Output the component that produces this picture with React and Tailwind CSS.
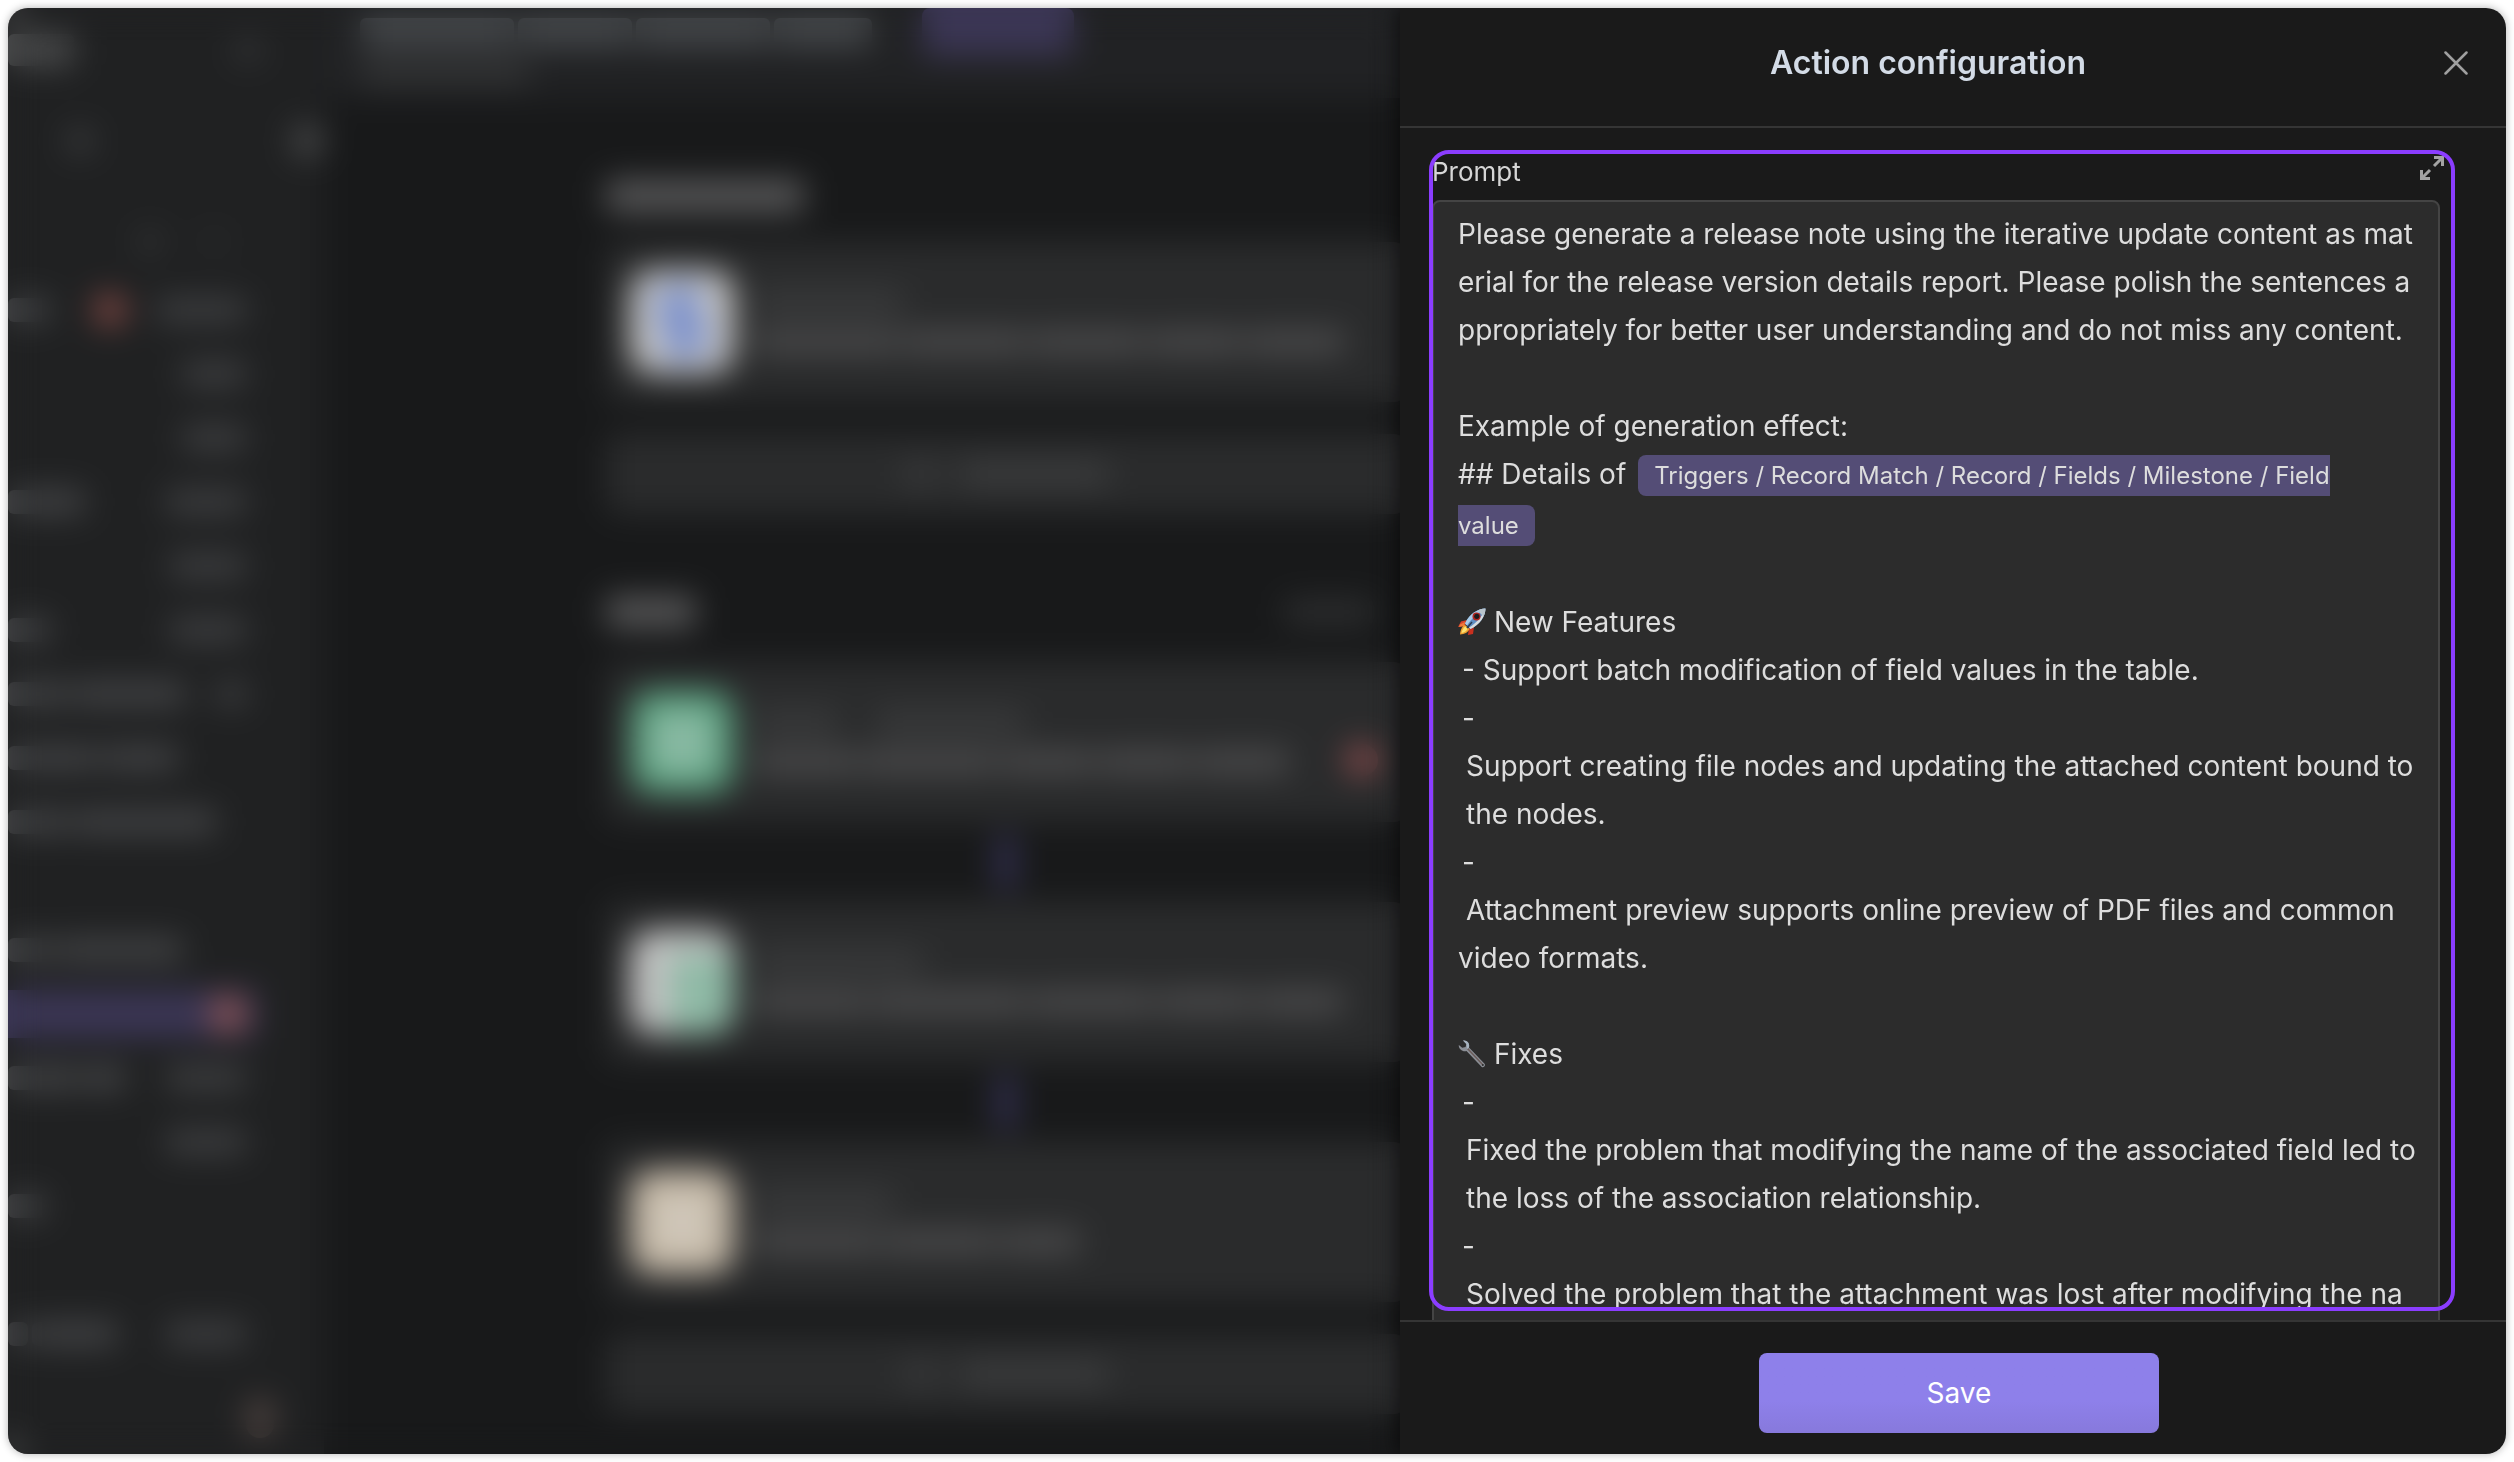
import React from "react";
import clsx from "clsx";

const navRows = [
  { left: ["w-[42px]"], dot: true, right: "w-[90px]" },
  { right: "w-[64px]" },
  { right: "w-[64px]" },
  { left: ["w-[77px]"], right: "w-[80px]" },
  { right: "w-[76px]" },
  { left: ["w-[42px]"], right: "w-[76px]" },
  { left: ["w-[60px]", "w-[114px]"], right: "w-[30px]" },
  { left: ["w-[90px]", "w-[76px]"] },
  { left: ["w-[60px]", "w-[144px]"] },
  { },
  { left: ["w-[45px]", "w-[126px]"] },
  { active: true, dot: true },
  { left: ["w-[70px]", "w-[44px]"], right: "w-[80px]" },
  { right: "w-[80px]" },
  { left: ["w-[37px]"] },
  { },
  { left: ["w-[20px]", "w-[86px]"], right: "w-[80px]" },
];

const Bar = ({ className }) => <div className={clsx("h-6 rounded-md", className)} />;

// a line of text made of word-sized bars
const Words = ({ widths, className }) => (
  <div className="flex gap-1">
    {widths.map((width, i) => (
      <Bar key={i} className={clsx(width, className)} />
    ))}
  </div>
);

const NavRow = ({ row }) => (
  <div className={clsx("h-16 flex items-center pr-[78px]", row.active && "relative")}>
    {row.active && <div className="absolute inset-y-2 left-0 right-[68px] bg-[#3b3655]" />}
    {row.left && <Words widths={row.left} className="bg-[#434446]" />}
    {row.dot && !row.active && <div className="w-8 h-8 ml-11 rounded-full bg-[#8a4c47]" />}
    {row.dot && row.active && <div className="relative w-9 h-9 ml-auto rounded-full bg-[#8f5554]" />}
    {row.right && <Bar className={clsx("ml-auto bg-[#3e3f41]", row.right)} />}
  </div>
);

const Sidebar = () => (
  <aside className="w-[316px] shrink-0 bg-[#202122]">
    <div className="h-[84px] flex items-center justify-between pr-16">
      <Bar className="w-[66px] h-8 bg-[#4a4b4c]" />
      <div className="w-6 h-6 rounded-full bg-[#38393b]" />
    </div>
    <div className="h-[90px] flex items-center justify-between pl-[60px] pt-2">
      <div className="w-6 h-6 rounded-full bg-[#424345]" />
      <div className="w-8 h-8 rounded-full bg-[#4a4b4c]" />
    </div>
    <div className="h-[96px] flex items-center gap-10 pt-6 pl-[130px]">
      <div className="w-6 h-6 rounded-full bg-[#343536]" />
      <div className="w-6 h-6 rounded-full bg-[#2a2b2c]" />
    </div>
    {navRows.map((row, i) => (
      <NavRow key={i} row={row} />
    ))}
    <div className="flex justify-end pt-8 pr-[50px]">
      <div className="w-7 h-10 rounded-full bg-[#504542]" />
    </div>
  </aside>
);

const StepCard = ({ icon, top, topTwo, bottom, alert }) => (
  <div className="h-40 flex items-center bg-[#2a2b2c] rounded-xl pl-6 pr-7">
    {icon}
    <div className="flex-1 ml-5 flex flex-col gap-4">
      <div className="flex gap-9">
        <Bar className={clsx("bg-[#3a3b3c]", top)} />
        {topTwo && <Bar className={clsx("bg-[#3a3b3c]", topTwo)} />}
      </div>
      <Words widths={bottom} className="bg-[#4b4b4c]" />
    </div>
    {alert && <div className="w-8 h-8 mt-9 rounded-full bg-[#904f50]" />}
  </div>
);

const AddRow = () => (
  <div className="mt-8 h-20 flex items-center justify-center gap-5 bg-[#2a2b2c] rounded-xl">
    <Bar className="w-9 bg-[#38393a]" />
    <Bar className="w-[150px] bg-[#3c3d3e]" />
  </div>
);

const Connector = () => (
  <div className="h-20 flex items-center justify-center">
    <div className="w-4 h-14 rounded-full bg-[#3b3763]" />
  </div>
);

const Workflow = () => (
  <main className="flex-1 min-w-0 overflow-hidden bg-[#18191a]">
    <div className="h-[90px] flex flex-col gap-3 bg-[#212224] pl-9 pt-2">
      <div className="flex items-center">
        <Words
          widths={["w-[154px]", "w-[114px]", "w-[134px]", "w-[98px]"]}
          className="h-7 bg-[#484b4e]"
        />
        <div className="w-[152px] h-12 -my-2 ml-[50px] rounded-lg bg-[#3b3654]" />
      </div>
      <Bar className="w-[170px] bg-[#343536]" />
    </div>
    <div className="w-[800px] ml-[282px]">
      <Bar className="mt-[82px] w-[198px] h-8 bg-[#585859]" />
      <div className="mt-[30px]">
        <StepCard
          icon={
            <div className="w-[104px] h-[104px] rounded-3xl bg-[#c4c4c4] flex items-center justify-center">
              <div className="w-11 h-[72px] bg-[#8094cc] -rotate-12" />
            </div>
          }
          top="w-[150px]"
          bottom={["w-[144px]", "w-[124px]", "w-[114px]", "w-[94px]", "w-[99px]"]}
        />
      </div>
      <AddRow />
      <div className="mt-[82px] mb-[34px] flex items-center justify-between pr-8">
        <Bar className="w-[90px] h-8 bg-[#565657]" />
        <Bar className="w-[90px] bg-[#2e2f30]" />
      </div>
      <StepCard
        icon={
          <div className="w-[104px] h-[104px] rounded-3xl bg-[#559c7a] flex items-center justify-center">
            <div className="w-16 h-16 rounded-lg bg-[#88b9a2]" />
          </div>
        }
        top="w-[85px]"
        topTwo="w-[150px]"
        bottom={["w-[104px]", "w-[134px]", "w-[94px]", "w-[94px]", "w-[93px]"]}
        alert
      />
      <Connector />
      <StepCard
        icon={
          <div className="w-[104px] h-[104px] rounded-3xl bg-[#c2c2c2] flex items-end justify-end">
            <div className="w-16 h-20 rounded-lg rounded-br-3xl bg-[#8fbaa6]" />
          </div>
        }
        top="w-[170px]"
        bottom={["w-[114px]", "w-[154px]", "w-[124px]", "w-[94px]", "w-[88px]"]}
      />
      <Connector />
      <StepCard
        icon={
          <div className="w-[104px] h-[104px] rounded-3xl bg-[#c6baa8] flex items-center justify-center">
            <div className="w-12 h-12 rounded-lg bg-[#d0c8bb]" />
          </div>
        }
        top="w-[140px]"
        bottom={["w-[124px]", "w-[114px]", "w-[80px]"]}
      />
      <AddRow />
    </div>
  </main>
);

const RocketIcon = () => (
  <svg viewBox="0 0 28 28" className="inline-block w-7 h-7 align-[-4px]" aria-hidden="true">
    <path d="M9 12 3 13.500 0 19l7-1z" fill="#d8432c" />
    <path d="M16 19l-1 7-5 1 1-7z" fill="#c9301f" />
    <path d="M2 16.500 7 14l-1 4-5 1z" fill="#ee7a3a" />
    <path d="M7 17c-3 1-4.500 5-5 9.500C6.500 26 10 24.500 11.500 21z" fill="#f0a431" />
    <path d="M7.500 18.500c-2 1-3.500 4-4 6.500 2.500-.5 5-1.500 6-4z" fill="#fbe372" />
    <path d="M27.500.5C20 1 12 5 7 15.500l5.500 5.500C22 16.500 27 9 27.500.5z" fill="#5f8fc4" />
    <path d="M27.500.5C20 1 12 5 7 15.500l2 2C14 10 20 5 27.500.5z" fill="#a9cbe8" />
    <path d="M27.500.5C25 7 19 15 11 19.500l1.500 1.500C22 16.500 27 9 27.500.5z" fill="#d9dde0" />
    <path d="M27.500.5c-3 .2-5.500.8-8 2l6 6c1.200-2.500 1.800-5 2-8z" fill="#b9c4cc" />
    <circle cx="18.500" cy="8.500" r="4" fill="#b3261e" />
    <circle cx="18.800" cy="8.300" r="2.600" fill="#1d1a1c" />
    <path d="M14 14l-5 6" stroke="#2b3c55" strokeWidth="1.500" />
  </svg>
);

const WrenchIcon = () => (
  <svg viewBox="0 0 28 28" className="inline-block w-7 h-7 align-[-4px]" aria-hidden="true">
    <path
      d="M5 .5c4-.5 7 2.500 6 7l15.500 16.200c1.600 2-1 4.600-3 3L8.500 11C4.500 12 .5 9 .8 5l3.400 2.800 3.400-.8.800-3z"
      fill="#8b8f96"
    />
    <path d="M9.500 8.500 25 25" stroke="#6b5c5a" strokeWidth="1.500" />
    <path d="M5 .5c4-.5 7 2.500 6 7l-2 1.500L8.400 4z" fill="#a7b4c0" />
    <circle cx="24.800" cy="25" r="1" fill="#2c2c2c" />
  </svg>
);

const ExpandIcon = () => (
  <svg viewBox="0 0 24 24" className="w-6 h-6" fill="none" stroke="currentColor" strokeWidth="3">
    <path d="M14 1.500h8.500V10M22.500 1.500l-8.500 8.500M1.500 14v8.500H10M1.500 22.500 10 14" />
  </svg>
);

const PromptEditor = () => (
  <div
    role="textbox"
    aria-multiline="true"
    aria-labelledby="prompt-label"
    contentEditable
    suppressContentEditableWarning
    className="h-[1200px] rounded-lg border-2 border-[#444444] bg-[#2c2c2c] pl-6 pr-4 py-2 text-[28px] leading-[48px] text-[#dddddd] outline-none whitespace-pre-wrap"
  >
    <p>
      Please generate a release note using the iterative update content as mat
      <br />
      erial for the release version details report. Please polish the sentences a
      <br />
      ppropriately for better user understanding and do not miss any content.
    </p>
    <p><br /></p>
    <p>Example of generation effect:</p>
    <p>
      {"## Details of "}
      <span className="ml-1 px-4 py-[6px] rounded-lg bg-[#544d76] text-[24px] leading-[48px]">
        Triggers / Record Match / Record / Fields / Milestone / Field
        <br />
        value
      </span>
    </p>
    <p><br /></p>
    <p><RocketIcon /> New Features</p>
    <p className="pl-1">- Support batch modification of field values in the table.</p>
    <p className="pl-1">-</p>
    <p className="pl-2">
      Support creating file nodes and updating the attached content bound to
      <br />
      the nodes.
    </p>
    <p className="pl-1">-</p>
    <p>
      {" Attachment preview supports online preview of PDF files and common"}
      <br />
      video formats.
    </p>
    <p><br /></p>
    <p><WrenchIcon /> Fixes</p>
    <p className="pl-1">-</p>
    <p className="pl-2">
      Fixed the problem that modifying the name of the associated field led to
      <br />
      the loss of the association relationship.
    </p>
    <p className="pl-1">-</p>
    <p className="pl-2">Solved the problem that the attachment was lost after modifying the na</p>
  </div>
);

const ActionDrawer = () => (
  <section className="relative flex flex-col min-h-0 bg-[#1a1a1a] shadow-[-4px_0_16px_rgba(0,0,0,0.5)]">
    <header className="h-[120px] shrink-0 flex items-center border-b-2 border-[#353535] pl-3 pr-[38px] pb-2">
      <h2 className="flex-1 text-center text-[32px] leading-10 font-semibold text-[#d3dbe6]">Action configuration</h2>
      <button type="button" aria-label="Close" className="text-[#a0a0a0]">
        <svg viewBox="0 0 24 24" className="w-6 h-6" fill="none" stroke="currentColor" strokeWidth="2.500" strokeLinecap="round">
          <path d="M1.500 1.500l21 21M22.500 1.500l-21 21" />
        </svg>
      </button>
    </header>

    <div className="relative flex-1 min-h-0 overflow-hidden pl-8 pr-[66px]">
      <div className="h-[72px] flex justify-between pt-7 -mr-1">
        <span id="prompt-label" className="text-[26px] leading-8 text-[#d6d6d6]">Prompt</span>
        <button type="button" aria-label="Expand editor" className="self-start text-[#a3a3a3]">
          <ExpandIcon />
        </button>
      </div>
      <PromptEditor />
      <div className="pointer-events-none absolute left-[29px] right-[51px] top-[22px] bottom-[9px] rounded-[20px] border-4 border-[#8b3dff]" />
    </div>

    <footer className="shrink-0 flex justify-center border-t-2 border-[#353535] pl-3 pt-[31px] pb-[21px]">
      <button
        type="button"
        className="w-[400px] h-20 rounded-lg bg-linear-to-b from-[#8e80ea] from-60% to-[#8779dc] text-[28px] text-white"
      >
        Save
      </button>
    </footer>
  </section>
);

const App = () => {
  return (
    <div className="h-screen p-2 bg-white font-['Inter',sans-serif]">
      <div className="h-full grid grid-cols-[1392fr_1106fr] grid-rows-[minmax(0,1fr)] rounded-[20px] overflow-hidden shadow-[0_0_8px_rgba(0,0,0,0.3)]">
        <div className="relative flex min-w-0 overflow-hidden" aria-hidden="true">
          <Sidebar />
          <Workflow />
          <div className="absolute inset-0 backdrop-blur-[16px]" />
        </div>
        <ActionDrawer />
      </div>
    </div>
  );
};

export default App;
